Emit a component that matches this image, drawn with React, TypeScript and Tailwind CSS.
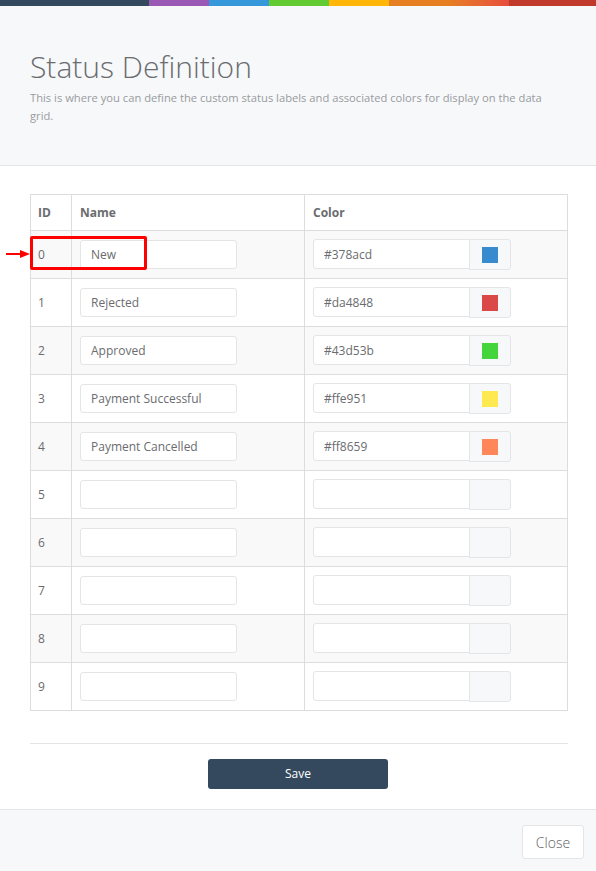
import React from "react";

const rows = [
  { id: 0, name: "New", color: "#378acd" },
  { id: 1, name: "Rejected", color: "#da4848" },
  { id: 2, name: "Approved", color: "#43d53b" },
  { id: 3, name: "Payment Successful", color: "#ffe951" },
  { id: 4, name: "Payment Cancelled", color: "#ff8659" },
  { id: 5, name: "", color: "" },
  { id: 6, name: "", color: "" },
  { id: 7, name: "", color: "" },
  { id: 8, name: "", color: "" },
  { id: 9, name: "", color: "" },
];

export default function App() {
  return (
    <div
      className="relative min-h-[871px] w-[596px] bg-white text-[#666]"
      style={{ fontFamily: '"Open Sans", "Liberation Sans", sans-serif' }}
    >
      {/* Colour stripe */}
      <div className="flex h-[6px]">
        <div className="w-[149px] bg-[#34495e]" />
        <div className="w-[60px] bg-[#9b59b6]" />
        <div className="w-[60px] bg-[#3498db]" />
        <div className="w-[60px] bg-[#62cb31]" />
        <div className="w-[60px] bg-[#ffb606]" />
        <div className="w-[60px] bg-[#e67e22]" />
        <div className="w-[60px] bg-gradient-to-r from-[#e67e22] to-[#e74c3c]" />
        <div className="flex-1 bg-[#c0392b]" />
      </div>

      {/* Header */}
      <div className="border-b border-[#e4e5e7] bg-[#f7f8fa] px-[30px] pb-[40px] pt-[43px]">
        <h1 className="text-[30px] font-light leading-[36px] text-[#6a6c6f]">Status Definition</h1>
        <p className="mt-[4px] text-[11.2px] leading-[18px] text-[#999b9e]">
          This is where you can define the custom status labels and associated colors for display on the data
          grid.
        </p>
      </div>

      {/* Body */}
      <div className="px-[30px] pt-[28px]">
        <table className="w-[538px] table-fixed border-collapse border border-[#ddd] text-[12px]">
          <colgroup>
            <col className="w-[41px]" />
            <col className="w-[233px]" />
            <col />
          </colgroup>
          <thead>
            <tr className="h-[36px]">
              <th className="border border-[#ddd] pl-[7px] pr-[8px] text-left font-bold text-[#6a6c6f]">ID</th>
              <th className="border border-[#ddd] px-[8px] text-left font-bold text-[#6a6c6f]">Name</th>
              <th className="border border-[#ddd] px-[8px] text-left font-bold text-[#6a6c6f]">Color</th>
            </tr>
          </thead>
          <tbody>
            {rows.map((r) => (
              <tr key={r.id} className={r.id % 2 === 0 ? "h-[48px] bg-[#f9f9f9]" : "h-[48px] bg-white"}>
                <td className="border border-[#ddd] pl-[7px] pr-[8px] text-[#6a6c6f]">{r.id}</td>
                <td className="border border-[#ddd] px-[8px]">
                  <input
                    readOnly
                    value={r.name}
                    className="h-[29px] w-[157px] rounded-[3px] border border-[#e4e5e7] bg-white px-[10px] text-[12px] text-[#6a6c6f] outline-none"
                  />
                </td>
                <td className="border border-[#ddd] px-[8px]">
                  <div className="flex">
                    <input
                      readOnly
                      value={r.color}
                      className="h-[30px] w-[157px] rounded-l-[3px] border border-[#e4e5e7] bg-white px-[10px] text-[12px] text-[#6a6c6f] outline-none"
                    />
                    <span className="-ml-px flex h-[31px] w-[42px] items-center justify-center rounded-r-[3px] border border-[#e4e5e7] bg-[#f7f8fa]">
                      {r.color && <span className="h-[16px] w-[16px]" style={{ backgroundColor: r.color }} />}
                    </span>
                  </div>
                </td>
              </tr>
            ))}
          </tbody>
        </table>

        <div className="mt-[32px] w-[538px] border-t border-[#e4e5e7]" />
        <div className="flex justify-center pb-[20px] pt-[15px]">
          <button className="h-[30px] w-[180px] rounded-[3px] bg-[#34495e] text-[12px] text-white">Save</button>
        </div>
      </div>

      {/* Footer */}
      <div className="flex justify-end border-t border-[#e4e5e7] bg-[#f7f8fa] px-[12px] pb-[13px] pt-[15px]">
        <button className="h-[34px] w-[62px] rounded-[3px] border border-[#e4e5e7] bg-white text-[14px] font-light text-[#5f6164]">
          Close
        </button>
      </div>

      {/* Annotation */}
      <div className="absolute left-[30px] top-[236px] h-[34px] w-[117px] rounded-[2px] border-[3px] border-[#ff0000]" />
      <svg className="absolute left-[6px] top-[249px]" width="24" height="10" viewBox="0 0 24 10">
        <line x1="0" y1="5" x2="16" y2="5" stroke="#ff0000" strokeWidth="2" />
        <polygon points="14,1 24,5 14,9" fill="#ff0000" />
      </svg>
    </div>
  );
}
